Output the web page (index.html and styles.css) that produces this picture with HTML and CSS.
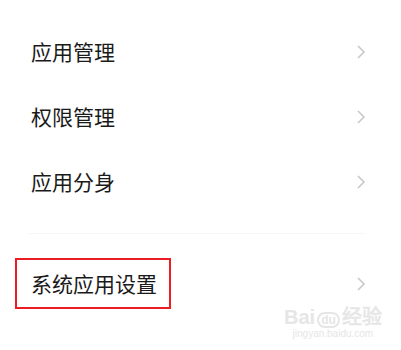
FILE: index.html
```html
<!DOCTYPE html>
<html lang="zh-CN">

<head>
    <meta charset="UTF-8">
    <meta name="viewport" content="width=device-width, initial-scale=1.0">
    <title>应用设置</title>
    <link rel="stylesheet" href="styles.css">
</head>

<body>
    <div class="page">
        <ul class="list">
            <li class="row"><span class="label">应用管理</span><svg class="arrow" width="10" height="14" viewBox="0 0 10 14"><polyline points="2,1 8,7 2,13" /></svg></li>
            <li class="row"><span class="label">权限管理</span><svg class="arrow" width="10" height="14" viewBox="0 0 10 14"><polyline points="2,1 8,7 2,13" /></svg></li>
            <li class="row"><span class="label">应用分身</span><svg class="arrow" width="10" height="14" viewBox="0 0 10 14"><polyline points="2,1 8,7 2,13" /></svg></li>
        </ul>
        <div class="divider"></div>
        <ul class="list second">
            <li class="row"><span class="label mark">系统应用设置</span><svg class="arrow" width="10" height="14" viewBox="0 0 10 14"><polyline points="2,1 8,7 2,13" /></svg></li>
        </ul>
        <!-- 水印 -->
        <div class="watermark">
            <div class="wm-logo">Bai<span class="wm-du">du</span>经验</div>
            <div class="wm-url">jingyan.baidu.com</div>
        </div>
    </div>
</body>

</html>
```

FILE: styles.css
```css
* {
    margin: 0;
    padding: 0;
}

ul {
    list-style: none;
}

body {
    background-color: #fff;
    font-family: "Noto Sans CJK SC", "Noto Sans", sans-serif;
    color: #1a1a1a;
}

.page {
    width: 401px;
    height: 350px;
    position: relative;
    overflow: hidden;
}

.list {
    padding-top: 19px;
}

.list.second {
    padding-top: 17px;
}

.row {
    height: 65px;
    display: flex;
    align-items: center;
    justify-content: space-between;
    padding: 0 35px 0 31px;
}

.label {
    font-size: 21px;
    line-height: 1;
}

.mark {
    display: inline-flex;
    align-items: center;
    box-sizing: border-box;
    height: 51px;
    margin-left: -16px;
    padding: 0 12px 0 14px;
    border: 2px solid #ec1c24;
}

.arrow polyline {
    fill: none;
    stroke: #c6c6c6;
    stroke-width: 1.5;
}

.divider {
    height: 1px;
    margin: 19px 36px 0 28px;
    background-color: #f6f6f6;
}

.watermark {
    position: absolute;
    left: 284px;
    top: 306px;
    color: #e6e6e6;
    font-family: "Liberation Sans", sans-serif;
    text-align: center;
}

.wm-logo {
    font-size: 20px;
    font-weight: bold;
    line-height: 22px;
}

.wm-du {
    display: inline-block;
    font-size: 12px;
    border: 2px solid #e6e6e6;
    border-radius: 8px;
    padding: 0 2px;
    margin: 0 2px;
    line-height: 12px;
}

.wm-url {
    font-size: 10px;
    line-height: 12px;
}
```
